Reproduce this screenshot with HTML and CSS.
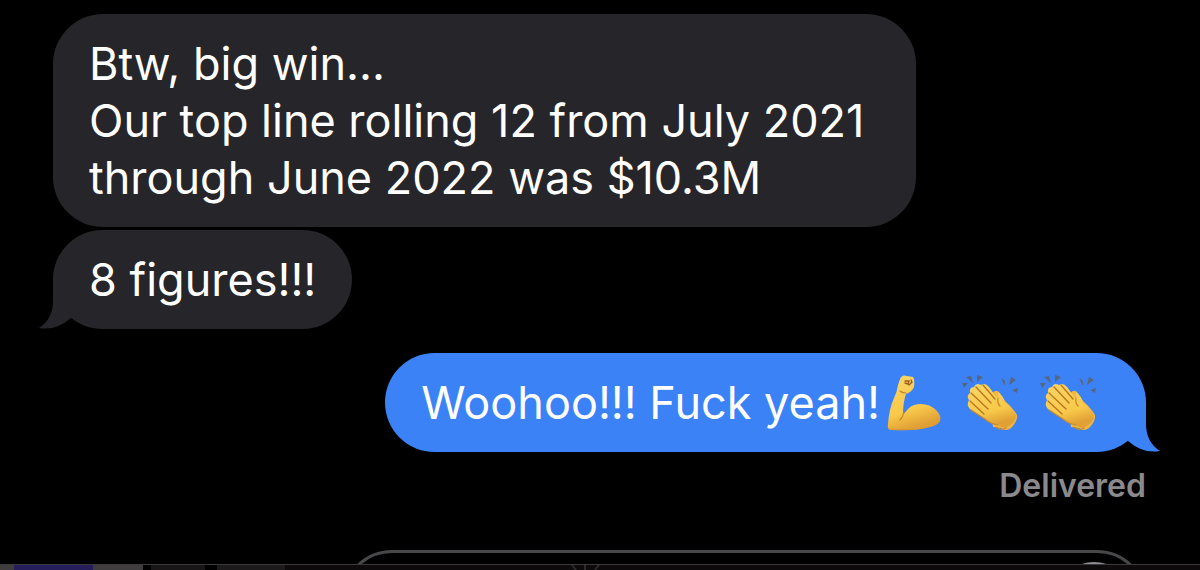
FILE: index.html
```
<!DOCTYPE html>
<html lang="en">
  <head>
    <meta charset="utf-8" />
    <meta name="viewport" content="width=device-width, initial-scale=1" />
    <title>Messages</title>
    <link rel="stylesheet" href="styles.css">
  </head>
  <body>
    <svg class="defs" width="0" height="0" aria-hidden="true">
      <defs>
        <linearGradient id="skin" x1="0" y1="0" x2="0.3" y2="1">
          <stop offset="0" stop-color="#fbd567" />
          <stop offset="0.7" stop-color="#f8c94a" />
          <stop offset="1" stop-color="#e0a035" />
        </linearGradient>
        <symbol id="arm" viewBox="7 8 56 60">
          <path fill="url(#skin)" d="M21 14 Q23 9 28 11 L34 12 Q36 15 35 22 Q33 27 27 29 Q24 37 24 50 Q27 46 30 43 Q34 39 42 39 Q51 39 57 45 Q63 51 61 56 Q59 61 47 63 Q32 66 12 65 Q8 65 9 59 Q10 44 15 33 Q18 27 19 20 Z" />
          <path fill="none" stroke="#c98325" stroke-width="1.2" stroke-linecap="round" d="M25 47 Q24 52 21 55 M27 28 Q23 28 21 26" />
          <path fill="none" stroke="#9c5f1c" stroke-width="1.4" stroke-linecap="round" d="M26 16 L30 16 L29 19 L26 18 M32 15 L33 17 L30 20" />
          <path fill="none" stroke="#d89a30" stroke-width="1.2" d="M10 64 Q35 66 48 62 Q57 60 60 56" />
        </symbol>
        <symbol id="clap" viewBox="9 8 56 60" overflow="visible">
          <path fill="#f0b63e" d="M38 28 Q40 24 44 27 L50 36 Q58 43 62 50 Q63 56 56 63 Q51 67 46 63 L38 62 L36 45 Z" />
          <path fill="url(#skin)" d="M14 35 Q11 31 15 28 Q14 22 19 22 Q21 17 26 20 Q30 17 34 22 L43 34 Q42 25 44 28 Q48 31 50 37 Q57 43 61 50 Q61 56 54 61 Q49 65 43 60 Q35 59 30 54 L15 44 Q11 40 14 35 Z" />
          <path fill="none" stroke="#b8761f" stroke-width="1.3" stroke-linecap="round" d="M15 36 L29 49 M16 28 L33 44 M21 22 L36 38 M28 20 L40 34" />
          <path fill="none" stroke="#c98a2b" stroke-width="1.2" stroke-linecap="round" d="M43 33 Q42 38 45 41 M16 45 L30 54 Q36 59 43 60 M41 62 Q46 66 51 63" />
          <path fill="#566680" d="M7 18 L13 18 L9 23 Z M11 12 L16 11 L18 18 Z M22 10 L28 12 L22 17 Z M46 13 L50 16 L50 21 Z M56 12 L61 15 L54 20 Z M57 25 L63 23 L62 28 Z" />
        </symbol>
      </defs>
    </svg>

    <main class="thread">
      <div class="bubble received">Btw, big win...<br>Our top line rolling 12 from July 2021 through June 2022 was $10.3M</div>
      <div class="bubble received">
        8 figures!!!
        <svg class="tail" viewBox="0 0 50 50" aria-hidden="true">
          <path d="M14 0 V22 Q14 40 0 49 Q17 52 32 39 L50 30 V0 Z" />
        </svg>
      </div>
      <div class="bubble sent">
        <span>Woohoo!!! Fuck yeah!</span>
        <span class="emojis">
          <svg role="img" aria-label="flexed biceps"><use href="#arm" /></svg>
          <svg role="img" aria-label="clapping hands"><use href="#clap" /></svg>
          <svg role="img" aria-label="clapping hands"><use href="#clap" /></svg>
        </span>
        <svg class="tail" viewBox="0 0 50 50" aria-hidden="true">
          <path d="M14 0 V22 Q14 40 0 49 Q17 52 32 39 L50 30 V0 Z" />
        </svg>
      </div>
      <p class="status">Delivered</p>
    </main>

    <footer class="composer">
      <div class="field">
        <input type="text" aria-label="Message" />
        <button type="button" aria-label="Record audio"></button>
      </div>
    </footer>

    <div class="app-strip">
      <span class="app gray"></span>
      <span class="app purple"></span>
      <span class="app gray wide"></span>
      <span class="app dark"></span>
      <span class="app darker"></span>
      <svg class="mark" viewBox="0 0 30 5" aria-hidden="true">
        <path d="M1 0 L5 5 M14 0 V5 M28 0 L24 5" />
      </svg>
    </div>
  </body>
</html>
```
FILE: styles.css
```
:root {
  --bg: #000;
  --received: #262529;
  --sent: #3b82f7;
  --line: #3a3a3c;
}
* {
  margin: 0;
  padding: 0;
  box-sizing: border-box;
}
body {
  height: 100vh;
  overflow: hidden;
  display: flex;
  flex-direction: column;
  background: var(--bg);
  color: #fff;
  font-family: Inter, "Liberation Sans", sans-serif;
}
.defs {
  position: absolute;
}
.thread {
  flex: 1;
  display: flex;
  flex-direction: column;
  align-items: flex-start;
  gap: 3px;
  padding: 14px 54px 0 53px;
}
.bubble {
  position: relative;
  max-width: 79%;
  padding: 21px 36px;
  border-radius: 50px;
  font-size: 45px;
  line-height: 57px;
}
.received {
  background: var(--received);
}
.sent {
  align-self: flex-end;
  display: flex;
  align-items: center;
  gap: 6px;
  margin-top: 21px;
  background: var(--sent);
}
.emojis {
  display: flex;
  gap: 22px;
  margin-right: 12px;
}
.emojis svg {
  width: 56px;
  height: 60px;
  margin: -2px 0;
  overflow: visible;
}
.tail {
  position: absolute;
  left: -14px;
  bottom: 0;
  width: 50px;
  height: 50px;
  fill: var(--received);
}
.sent .tail {
  left: auto;
  right: -14px;
  fill: var(--sent);
  transform: scaleX(-1);
}
.status {
  align-self: flex-end;
  margin-top: 12px;
  color: #8a8a8e;
  font-size: 32px;
  font-weight: 600;
  line-height: 38px;
}
.composer {
  height: 14px;
  overflow: hidden;
  padding: 0 53px 0 342px;
}
.field {
  display: flex;
  align-items: flex-start;
  height: 100px;
  padding: 9px 12px;
  border: 3px solid #48484a;
  border-radius: 50px;
}
.field input {
  flex: 1;
  min-width: 0;
  height: 76px;
  background: none;
  border: none;
  outline: none;
  color: #fff;
  font: inherit;
  font-size: 45px;
}
.field button {
  width: 76px;
  height: 76px;
  border: none;
  border-radius: 50%;
  background: #8e8e92;
}
.app-strip {
  display: flex;
  height: 6px;
  border-top: 1px solid var(--line);
  background: #0c0a0b;
}
.app {
  width: 14px;
}
.gray {
  background: #403d3f;
}
.purple {
  width: 79px;
  background: #251e5a;
}
.wide {
  width: 50px;
}
.dark {
  width: 62px;
  background: #181617;
  border-left: 8px solid #000;
}
.darker {
  width: 80px;
  background: #1c1a1b;
  border-left: 12px solid #000;
}
.mark {
  width: 30px;
  height: 5px;
  margin-left: 286px;
  fill: none;
  stroke: #2c2a2b;
  stroke-width: 2;
}
```
